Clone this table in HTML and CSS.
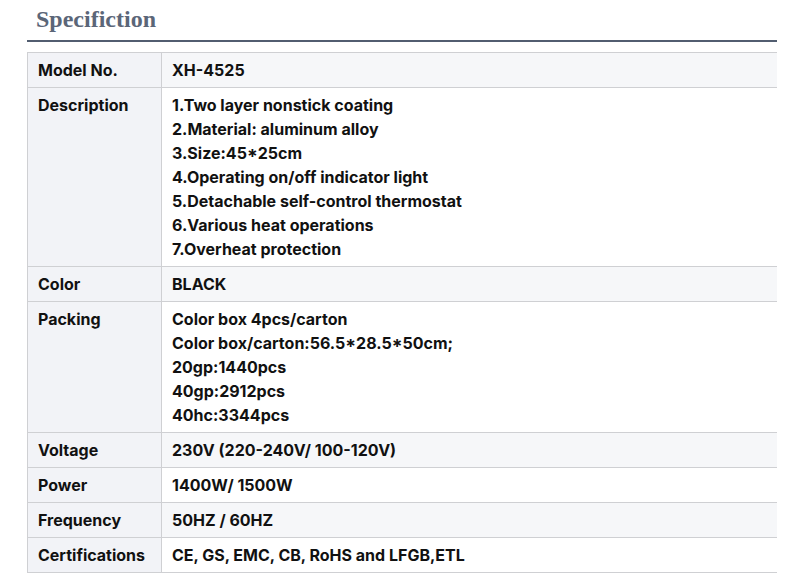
FILE: index.html
```html
<!DOCTYPE html>
<html>
<head>
<meta charset="utf-8">
<link rel="stylesheet" href="styles.css">
</head>
<body>
<div class="spec">
  <h2 class="spec-title">Specifiction</h2>
  <table class="spec-table">
    <tr class="odd"><th>Model No.</th><td>XH-4525</td></tr>
    <tr><th>Description</th><td>1.Two layer nonstick coating<br>2.Material: aluminum alloy<br>3.Size:45*25cm<br>4.Operating on/off indicator light<br>5.Detachable self-control thermostat<br>6.Various heat operations<br>7.Overheat protection</td></tr>
    <tr class="odd"><th>Color</th><td>BLACK</td></tr>
    <tr><th>Packing</th><td>Color box 4pcs/carton<br>Color box/carton:56.5*28.5*50cm;<br>20gp:1440pcs<br>40gp:2912pcs<br>40hc:3344pcs</td></tr>
    <tr class="odd"><th>Voltage</th><td>230V (220-240V/ 100-120V)</td></tr>
    <tr><th>Power</th><td>1400W/ 1500W</td></tr>
    <tr class="odd"><th>Frequency</th><td>50HZ / 60HZ</td></tr>
    <tr><th>Certifications</th><td>CE, GS, EMC, CB, RoHS and LFGB,ETL</td></tr>
  </table>
</div>
</body>
</html>
```
FILE: styles.css
```css
html, body { margin: 0; padding: 0; background: #fff; }
.spec { margin-left: 27px; width: 750px; }
.spec-title {
  margin: 0;
  padding: 5px 0 7px 9px;
  font-family: "Liberation Serif", serif;
  font-weight: bold;
  font-size: 24px;
  line-height: 28px;
  color: #5b6678;
  border-bottom: 2px solid #525d70;
}
.spec-table {
  margin-top: 10px;
  width: 100%;
  border-collapse: collapse;
  font-family: Inter, "Liberation Sans", sans-serif;
  font-weight: 700;
  font-size: 16px;
  line-height: 24px;
  color: #111;
}
.spec-table th, .spec-table td {
  text-align: left;
  vertical-align: top;
  padding: 5px 10px;
  border-top: 1px solid #cfd0d3;
  border-bottom: 1px solid #cfd0d3;
  font-weight: 700;
}
.spec-table th {
  width: 113px;
  background: #f2f3f7;
  border-left: 1px solid #cfd0d3;
  border-right: 1px solid #cfd0d3;
}
.spec-table td { background: #fff; }
.spec-table tr.odd td { background: #f6f7f9; }
```
